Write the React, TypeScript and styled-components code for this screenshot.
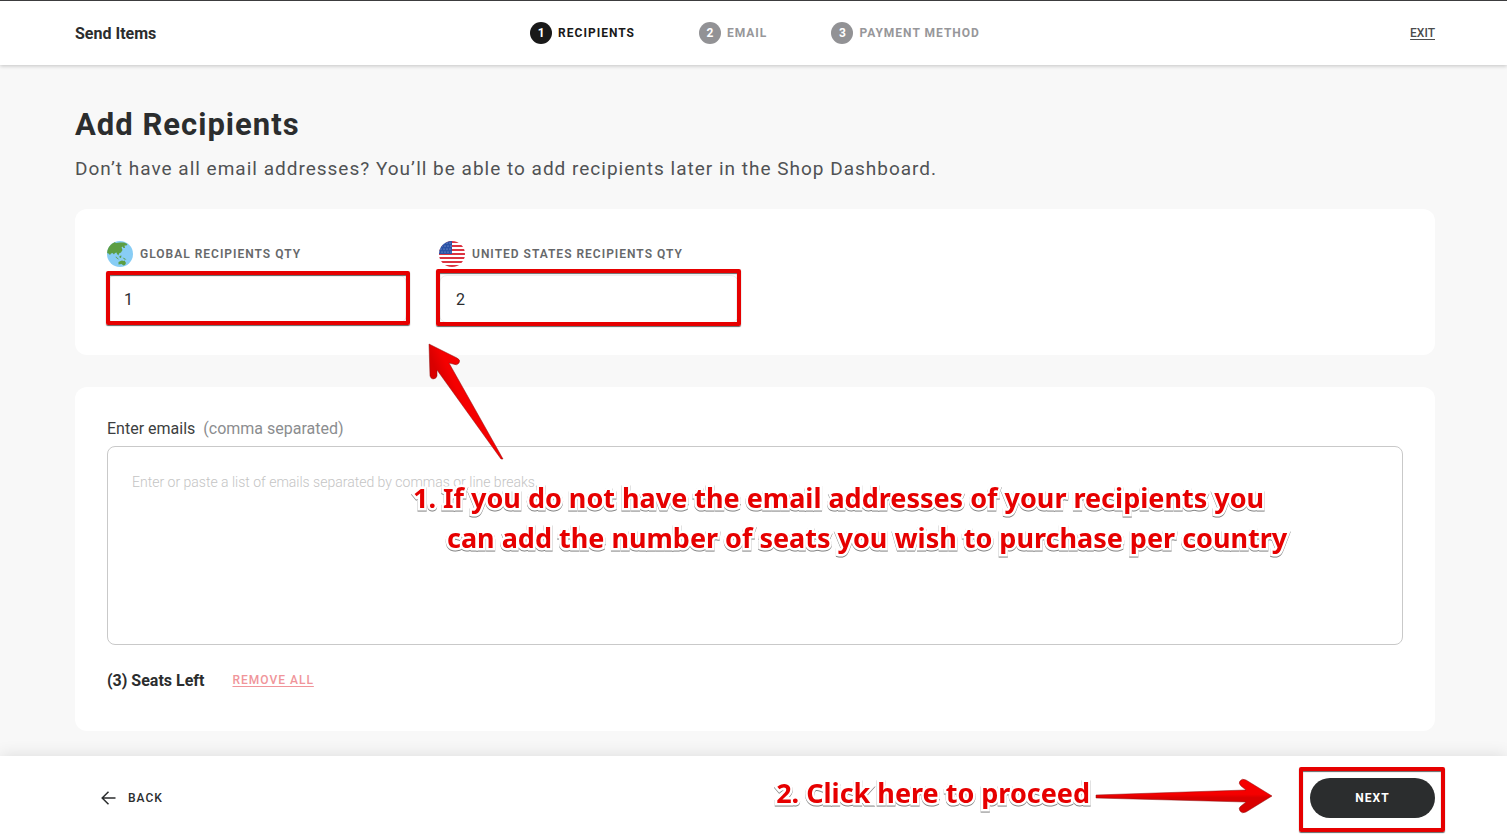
import React from "react";
import styled, { createGlobalStyle } from "styled-components";

const red = "#e60000";

const GlobalStyle = createGlobalStyle`
  * { box-sizing: border-box; }
  body {
    margin: 0;
    background: #f8f8f8;
    color: #2b2d2e;
    font-family: Roboto, "Liberation Sans", sans-serif;
  }
  h1, p, ol { margin: 0; padding: 0; }
  button, input, textarea { font: inherit; color: inherit; letter-spacing: inherit; }
`;

const Page = styled.div`
  display: flex;
  flex-direction: column;
  min-height: 100vh;
`;

const Header = styled.header`
  display: grid;
  grid-template-columns: 1fr auto 1fr;
  align-items: center;
  height: 65px;
  padding: 0 72px 0 75px;
  background: #fff;
  border-top: 1px solid #3c3c3e;
  box-shadow: 0 1px 4px rgba(0, 0, 0, 0.22);
`;

const Brand = styled.div`
  font-size: 16px;
  font-weight: 700;
`;

const Steps = styled.ol`
  display: flex;
  gap: 64px;
  list-style: none;
`;

const Step = styled.li<{ $active?: boolean }>`
  display: flex;
  align-items: center;
  gap: 6px;
  color: ${(p) => (p.$active ? "#191919" : "#97979a")};
  font-size: 12px;
  font-weight: 700;
  letter-spacing: 1px;
`;

const StepNumber = styled.span<{ $active?: boolean }>`
  display: grid;
  place-items: center;
  width: 22px;
  height: 22px;
  border-radius: 50%;
  background: ${(p) => (p.$active ? "#191919" : "#929295")};
  color: #fff;
  letter-spacing: 0;
`;

const ExitLink = styled.a`
  justify-self: end;
  color: #4b4c4d;
  font-size: 12px;
  font-weight: 500;
  text-underline-offset: 2px;
`;

const Main = styled.main`
  position: relative;
  flex: 1;
  padding: 40px 72px 25px 75px;
`;

const Title = styled.h1`
  font-size: 31px;
  line-height: 40px;
  font-weight: 700;
  letter-spacing: 1px;
`;

const Subtitle = styled.p`
  margin-top: 8px;
  color: #505254;
  font-size: 19px;
  line-height: 32px;
  letter-spacing: 1px;
`;

const Card = styled.section`
  padding: 32px;
  border-radius: 12px;
  background: #fff;
`;

const QuantityCard = styled(Card)`
  display: flex;
  gap: 32px;
  margin-top: 24px;
`;

const EmailCard = styled(Card)`
  margin-top: 32px;
  padding-bottom: 36px;
`;

const Field = styled.div`
  width: 300px;
`;

const FieldLabel = styled.label`
  display: flex;
  align-items: center;
  gap: 7px;
  height: 26px;
  margin-bottom: 8px;
  color: #66686a;
  font-size: 12px;
  font-weight: 600;
  letter-spacing: 1px;
  white-space: nowrap;
`;

const InputWrap = styled.div`
  position: relative;
`;

const QuantityInput = styled.input`
  display: block;
  width: 100%;
  height: 48px;
  padding: 0 16px;
  border: 1px solid #eee;
  border-radius: 8px;
  background: #fff;
  font-size: 16px;
  outline: none;
`;

const Frame = styled.span<{ $inset: string }>`
  position: absolute;
  inset: ${(p) => p.$inset};
  border: 4px solid ${red};
  border-radius: 2px;
  box-shadow: 0 1px 1px rgba(0, 0, 0, 0.6), inset 0 1px 1px rgba(0, 0, 0, 0.6);
  pointer-events: none;
`;

const EmailLabel = styled.label`
  display: block;
  margin-bottom: 8px;
  color: #3c3e40;
  font-size: 16px;
  line-height: 19px;
`;

const Hint = styled.span`
  margin-left: 8px;
  color: #8b8d8f;
`;

const EmailArea = styled.textarea`
  display: block;
  width: 100%;
  height: 199px;
  padding: 23px 24px;
  border: 1px solid #c9c9c9;
  border-radius: 8px;
  background: #fff;
  font-size: 14px;
  line-height: 24px;
  resize: none;
  outline: none;
  &::placeholder { color: #c4c4c4; font-weight: 300; opacity: 1; }
`;

const Summary = styled.div`
  display: flex;
  align-items: center;
  gap: 28px;
  height: 30px;
  margin-top: 20px;
`;

const Seats = styled.strong`
  font-size: 16px;
  font-weight: 700;
`;

const RemoveButton = styled.button`
  padding: 0;
  border: 0;
  background: none;
  color: #f0959a;
  font-size: 12px;
  font-weight: 500;
  letter-spacing: 1px;
  text-decoration: underline;
  text-underline-offset: 2px;
`;

const Footer = styled.footer`
  position: relative;
  display: flex;
  align-items: center;
  justify-content: space-between;
  height: 83px;
  padding: 0 72px 0 101px;
  background: #fff;
  box-shadow: 0 0 16px rgba(0, 0, 0, 0.12);
`;

const BackButton = styled.button`
  display: flex;
  align-items: center;
  gap: 12px;
  padding: 0;
  border: 0;
  background: none;
  font-size: 12px;
  font-weight: 500;
  letter-spacing: 1px;
`;

const NextWrap = styled.div`
  position: relative;
`;

const NextButton = styled.button`
  display: block;
  width: 125px;
  height: 40px;
  border: 0;
  border-radius: 20px;
  background: #2b2d2e;
  color: #fff;
  font-size: 12px;
  font-weight: 700;
  letter-spacing: 1px;
`;

const Note = styled.p`
  position: absolute;
  color: ${red};
  font-family: "Noto Sans", "Open Sans", sans-serif;
  font-size: 27px;
  line-height: 40px;
  font-weight: 700;
  white-space: nowrap;
  -webkit-text-stroke: 5px #fff;
  paint-order: stroke fill;
  filter: drop-shadow(0 1px 0 rgba(0, 0, 0, 0.5));
  pointer-events: none;
`;

const SeatsNote = styled(Note)`
  top: 413px;
  left: 413px;
`;

const NoteLine = styled.span<{ $indent?: boolean }>`
  display: block;
  padding-left: ${(p) => (p.$indent ? "34px" : "0")};
`;

const ProceedNote = styled(Note)`
  top: 17px;
  right: 417px;
`;

const SeatsArrow = styled.svg`
  position: absolute;
  top: 275px;
  left: 424px;
  pointer-events: none;
`;

const ProceedArrow = styled.svg`
  position: absolute;
  top: 20px;
  right: 232px;
  pointer-events: none;
`;

const Globe = () => (
  <svg width="26" height="26" viewBox="0 0 26 26" aria-hidden="true">
    <defs>
      <clipPath id="globe"><circle cx="13" cy="13" r="13" /></clipPath>
    </defs>
    <g clipPath="url(#globe)">
      <rect width="26" height="26" fill="#88cdf5" />
      <path
        fill="#5c9e43"
        d="M0 12V4L6 0L9 2L13 1.500L17 1.500L20.500 3L19.500 4.500L17.500 4.500L18 7L16.500 7L15.500 5.500L14.500 6.500L15.500 9L14 11.500L12 12.500L11.500 14.500L10 13L9.500 11.500L8 12L7 13.500L5.500 12L4 12.500L3 14L1.500 12.500Z"
      />
      <path
        fill="#5c9e43"
        d="M9 15.500L11 17.500L12.500 18.500L10.500 18L8.500 16ZM12.500 15L14.500 14.500L14 17L12.500 16.500ZM15.500 16.500L17 17L19.500 18.500L17.500 18.500ZM11.500 21L13.500 20L15 19.500L16.500 20L17.500 19.500L19 22L18 24L16.500 24.500L14.500 23L11.500 23.500Z"
      />
    </g>
  </svg>
);

const Flag = () => (
  <svg width="26" height="26" viewBox="0 0 26 26" aria-hidden="true">
    <defs>
      <clipPath id="flag"><circle cx="13" cy="13" r="13" /></clipPath>
    </defs>
    <g clipPath="url(#flag)">
      <rect width="26" height="26" fill="#fff" />
      {[0, 4, 8, 12, 16, 20, 24].map((y) => (
        <rect key={y} y={y} width="26" height="2" fill="#dc3340" />
      ))}
      <rect width="13" height="13" fill="#2a51a5" />
      {[2, 5, 8, 11].map((y) =>
        [2, 5, 8, 11].map((x) => (
          <circle key={`${x}-${y}`} cx={x + (y % 2)} cy={y} r="0.6" fill="#9fb3dc" />
        ))
      )}
    </g>
  </svg>
);

const BackArrow = () => (
  <svg width="15" height="14" viewBox="0 0 15 14" fill="none" stroke="#2b2d2e" strokeWidth="1.5" aria-hidden="true">
    <path d="M14.5 7H1.5M7.5 0.8L1.2 7l6.3 6.2" />
  </svg>
);

export default function App() {
  return (
    <Page>
      <GlobalStyle />
      <Header>
        <Brand>Send Items</Brand>
        <Steps>
          <Step $active>
            <StepNumber $active>1</StepNumber>RECIPIENTS
          </Step>
          <Step>
            <StepNumber>2</StepNumber>EMAIL
          </Step>
          <Step>
            <StepNumber>3</StepNumber>PAYMENT METHOD
          </Step>
        </Steps>
        <ExitLink href="#exit">EXIT</ExitLink>
      </Header>

      <Main>
        <Title>Add Recipients</Title>
        <Subtitle>
          Don’t have all email addresses? You’ll be able to add recipients later in the Shop Dashboard.
        </Subtitle>

        <QuantityCard>
          <Field>
            <FieldLabel htmlFor="global-qty"><Globe />GLOBAL RECIPIENTS QTY</FieldLabel>
            <InputWrap>
              <QuantityInput id="global-qty" defaultValue="1" />
              <Frame $inset="-4px -3px -2px -1px" />
            </InputWrap>
          </Field>
          <Field>
            <FieldLabel htmlFor="us-qty"><Flag />UNITED STATES RECIPIENTS QTY</FieldLabel>
            <InputWrap>
              <QuantityInput id="us-qty" defaultValue="2" />
              <Frame $inset="-6px -2px -3px -3px" />
            </InputWrap>
          </Field>
        </QuantityCard>

        <EmailCard>
          <EmailLabel htmlFor="emails">
            Enter emails<Hint>(comma separated)</Hint>
          </EmailLabel>
          <EmailArea
            id="emails"
            placeholder="Enter or paste a list of emails separated by commas or line breaks."
          />
          <Summary>
            <Seats>(3) Seats Left</Seats>
            <RemoveButton type="button">REMOVE ALL</RemoveButton>
          </Summary>
        </EmailCard>

        <SeatsArrow width="84" height="124" viewBox="0 0 84 124" aria-hidden="true">
          <defs>
            <linearGradient id="seats-red" x1="0" y1="0.6" x2="0.6" y2="0.2">
              <stop offset="0.4" stopColor="#d90000" />
              <stop offset="0.6" stopColor="#f50000" />
            </linearGradient>
          </defs>
          <path
            d="M5 4L33 18Q37 20 35 23Q33 26 29 24L25 23L79 119L77 119L13 30L13 36Q12 39 9 39Q7 39 6 36Z"
            fill="url(#seats-red)"
            stroke="#8a1010"
            strokeWidth="0.5"
          />
        </SeatsArrow>
        <SeatsNote>
          <NoteLine>1. If you do not have the email addresses of your recipients you</NoteLine>
          <NoteLine $indent>can add the number of seats you wish to purchase per country</NoteLine>
        </SeatsNote>
      </Main>

      <Footer>
        <BackButton type="button"><BackArrow />BACK</BackButton>
        <ProceedNote>2. Click here to proceed</ProceedNote>
        <ProceedArrow width="180" height="40" viewBox="0 0 180 40" aria-hidden="true">
          <defs>
            <linearGradient id="proceed-red" x1="0" y1="0" x2="0" y2="1">
              <stop offset="0.45" stopColor="#f50000" />
              <stop offset="0.55" stopColor="#d90000" />
            </linearGradient>
          </defs>
          <path
            d="M1 19L151 14L146 10Q143 7 145 5Q147 2 151 4L177 20L151 36Q147 38 145 35Q143 32 146 30L151 26L1 22Z"
            fill="url(#proceed-red)"
            stroke="#8a1010"
            strokeWidth="0.5"
          />
        </ProceedArrow>
        <NextWrap>
          <NextButton type="button">NEXT</NextButton>
          <Frame $inset="-11px -10px -14px -11px" />
        </NextWrap>
      </Footer>
    </Page>
  );
}
